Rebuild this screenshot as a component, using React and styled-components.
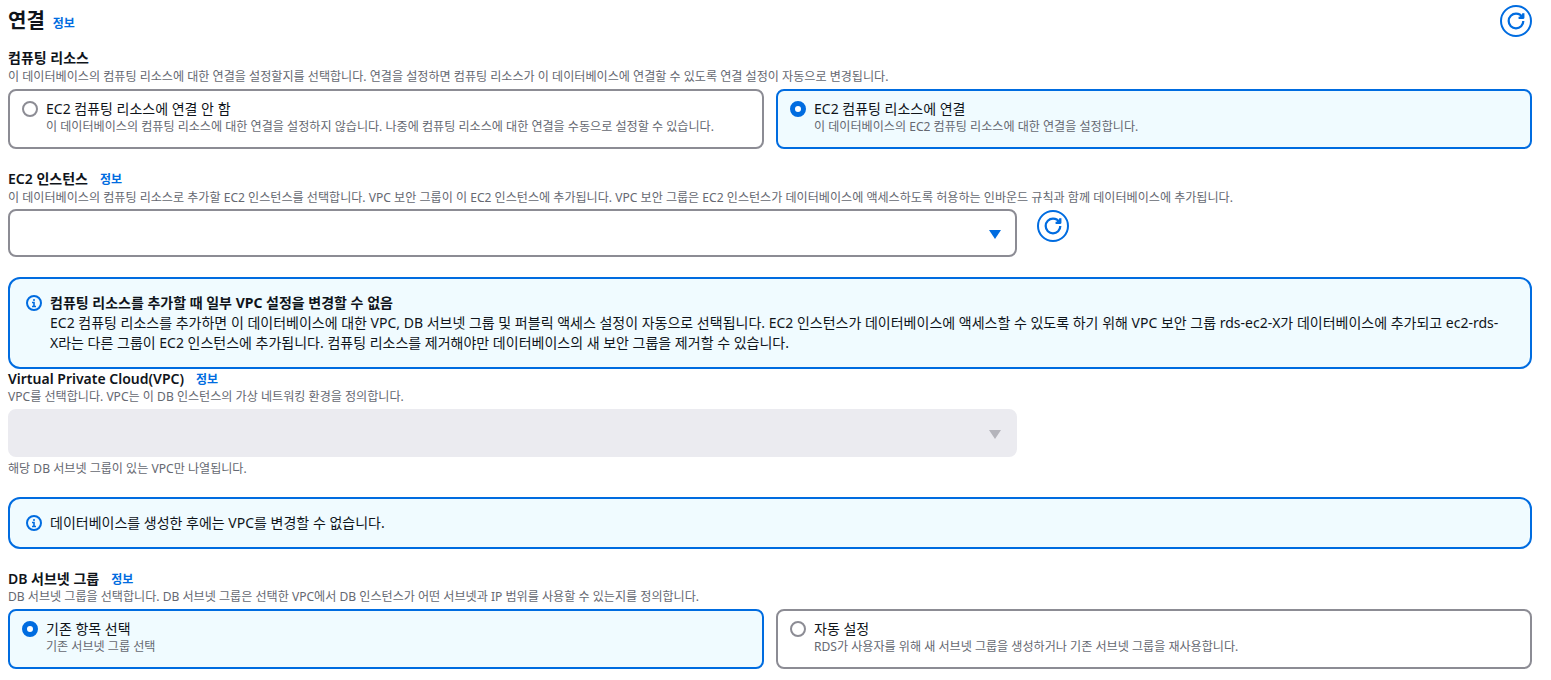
import React from "react";
import styled, { createGlobalStyle } from "styled-components";

const Global = createGlobalStyle`
  html, body { margin: 0; padding: 0; background: #fff; overflow: hidden; }
  body { font-family: "Noto Sans", "Noto Sans CJK KR", sans-serif; color: #0f141a; }
`;
const Page = styled.div`
  width: 1551px; height: 680px; box-sizing: border-box; padding: 0 19px 0 8px;
  display: flex; flex-direction: column; overflow: hidden;
`;
const Header = styled.div`
  height: 48px; display: flex; justify-content: space-between; align-items: flex-start; flex: none;
`;
const TitleRow = styled.div`display: flex; align-items: baseline; gap: 8px; padding-top: 6px;`;
const Title = styled.h2`margin: 0; font-size: 20px; line-height: 30px; font-weight: 700;`;
const Info = styled.a`font-size: 12px; line-height: 16px; font-weight: 700; color: #006ce0;`;
const Field = styled.div`display: flex; flex-direction: column; flex: none; margin-top: ${p => p.$mt || 0}px;`;
const LabelRow = styled.div`display: flex; align-items: baseline; gap: 12px; height: 20px;`;
const Label = styled.div`font-size: 14px; line-height: 20px; font-weight: 600;`;
const Desc = styled.div`
  font-size: 12.08px; line-height: 16px; color: #656871; white-space: nowrap; height: 16px;
  margin-top: ${p => p.$mt || 0}px;
`;
const Cards = styled.div`display: grid; grid-template-columns: 756px 756px; gap: 12px; margin-top: ${p => p.$mt || 4}px;`;
const Card = styled.div`
  box-sizing: border-box; height: 60px; border: 2px solid ${p => p.$on ? "#006ce0" : "#8c8c94"};
  border-radius: 8px; background: ${p => p.$on ? "#f0fbff" : "#fff"};
  display: flex; gap: 8px; padding: 8px 12px;
`;
const Radio = styled.span`
  box-sizing: border-box; flex: none; width: 16px; height: 16px; margin-top: 2px; border-radius: 50%;
  background: #fff; border: ${p => p.$on ? "5px solid #006ce0" : "2px solid #8c8c94"};
`;
const CardText = styled.div`display: flex; flex-direction: column;`;
const CardTitle = styled.div`font-size: 14px; line-height: 20px;`;
const Row = styled.div`display: flex; align-items: flex-start; gap: 20px; margin-top: ${p => p.$mt || 3}px;`;
const Select = styled.div`
  box-sizing: border-box; width: 1009px; height: 48px; border-radius: 8px;
  border: 2px solid ${p => p.$off ? "#ebebf0" : "#8c8c94"}; background: ${p => p.$off ? "#ebebf0" : "#fff"};
  display: flex; align-items: center; justify-content: flex-end; padding-right: 14px;
`;
const Caret = styled.span`
  width: 0; height: 0; border-left: 6px solid transparent; border-right: 6px solid transparent;
  border-top: 9px solid ${p => p.$off ? "#b4b4bb" : "#006ce0"}; margin-top: 2px;
`;
const RoundButton = styled.button`
  box-sizing: border-box; width: 32px; height: 32px; border-radius: 50%; border: 2px solid #006ce0;
  background: #fff; padding: 0; display: flex; align-items: center; justify-content: center; color: #006ce0;
  margin-top: ${p => p.$mt || 0}px;
`;
const Alert = styled.div`
  box-sizing: border-box; flex: none; width: 1524px; min-height: ${p => p.$h}px; margin-top: ${p => p.$mt}px;
  border: 2px solid #006ce0; border-radius: 12px; background: #f0fbff;
  display: flex; gap: 8px; padding: 14px 24px 14px 16px; font-size: 14px; line-height: 20px;
`;
const AlertIcon = styled.svg`flex: none; width: 16px; height: 16px; margin-top: 2px;`;
const AlertTitle = styled.div`font-weight: 700;`;

const Refresh = () => (
  <svg width="18" height="18" viewBox="0 0 16 16" fill="none" stroke="currentColor" strokeWidth="2" strokeLinejoin="round">
    <path d="M14.5 8A6.5 6.5 0 1 1 8 1.5c2.4 0 4.6 1.3 5.7 3.3" />
    <path d="M14.5 1v4.2h-4.2" fill="currentColor" />
  </svg>
);
const InfoIcon = () => (
  <AlertIcon viewBox="0 0 16 16" fill="none" stroke="#006ce0" strokeWidth="2">
    <circle cx="8" cy="8" r="7" />
    <path d="M8 11.5V7.5H6M10 11.5H6" strokeWidth="1.6" />
    <path d="M7.99 5H8v.01h-.01z" strokeLinejoin="round" />
  </AlertIcon>
);
const Opt = ({ on, title, desc }) => (
  <Card $on={on}>
    <Radio $on={on} />
    <CardText>
      <CardTitle>{title}</CardTitle>
      <Desc>{desc}</Desc>
    </CardText>
  </Card>
);

export default function App() {
  return (
    <Page>
      <Global />
      <Header>
        <TitleRow><Title>연결</Title><Info>정보</Info></TitleRow>
        <RoundButton $mt={5}><Refresh /></RoundButton>
      </Header>
      <Field>
        <Label>컴퓨팅 리소스</Label>
        <Desc $mt={1}>이 데이터베이스의 컴퓨팅 리소스에 대한 연결을 설정할지를 선택합니다. 연결을 설정하면 컴퓨팅 리소스가 이 데이터베이스에 연결할 수 있도록 연결 설정이 자동으로 변경됩니다.</Desc>
        <Cards>
          <Opt title="EC2 컴퓨팅 리소스에 연결 안 함" desc="이 데이터베이스의 컴퓨팅 리소스에 대한 연결을 설정하지 않습니다. 나중에 컴퓨팅 리소스에 대한 연결을 수동으로 설정할 수 있습니다." />
          <Opt on title="EC2 컴퓨팅 리소스에 연결" desc="이 데이터베이스의 EC2 컴퓨팅 리소스에 대한 연결을 설정합니다." />
        </Cards>
      </Field>
      <Field $mt={20}>
        <LabelRow><Label>EC2 인스턴스</Label><Info>정보</Info></LabelRow>
        <Desc $mt={1}>이 데이터베이스의 컴퓨팅 리소스로 추가할 EC2 인스턴스를 선택합니다. VPC 보안 그룹이 이 EC2 인스턴스에 추가됩니다. VPC 보안 그룹은 EC2 인스턴스가 데이터베이스에 액세스하도록 허용하는 인바운드 규칙과 함께 데이터베이스에 추가됩니다.</Desc>
        <Row>
          <Select><Caret /></Select>
          <RoundButton $mt={1}><Refresh /></RoundButton>
        </Row>
      </Field>
      <Alert $h={92} $mt={20}>
        <InfoIcon />
        <div>
          <AlertTitle>컴퓨팅 리소스를 추가할 때 일부 VPC 설정을 변경할 수 없음</AlertTitle>
          EC2 컴퓨팅 리소스를 추가하면 이 데이터베이스에 대한 VPC, DB 서브넷 그룹 및 퍼블릭 액세스 설정이 자동으로 선택됩니다. EC2 인스턴스가 데이터베이스에 액세스할 수 있도록 하기 위해 VPC 보안 그룹 rds-ec2-X가 데이터베이스에 추가되고 ec2-rds-X라는 다른 그룹이 EC2 인스턴스에 추가됩니다. 컴퓨팅 리소스를 제거해야만 데이터베이스의 새 보안 그룹을 제거할 수 있습니다.
        </div>
      </Alert>
      <Field>
        <LabelRow><Label>Virtual Private Cloud(VPC)</Label><Info>정보</Info></LabelRow>
        <Desc>VPC를 선택합니다. VPC는 이 DB 인스턴스의 가상 네트워킹 환경을 정의합니다.</Desc>
        <Row $mt={4}><Select $off><Caret $off /></Select></Row>
        <Desc $mt={4}>해당 DB 서브넷 그룹이 있는 VPC만 나열됩니다.</Desc>
      </Field>
      <Alert $h={52} $mt={20}>
        <InfoIcon />
        <div>데이터베이스를 생성한 후에는 VPC를 변경할 수 없습니다.</div>
      </Alert>
      <Field $mt={20}>
        <LabelRow><Label>DB 서브넷 그룹</Label><Info>정보</Info></LabelRow>
        <Desc>DB 서브넷 그룹을 선택합니다. DB 서브넷 그룹은 선택한 VPC에서 DB 인스턴스가 어떤 서브넷과 IP 범위를 사용할 수 있는지를 정의합니다.</Desc>
        <Cards>
          <Opt on title="기존 항목 선택" desc="기존 서브넷 그룹 선택" />
          <Opt title="자동 설정" desc="RDS가 사용자를 위해 새 서브넷 그룹을 생성하거나 기존 서브넷 그룹을 재사용합니다." />
        </Cards>
      </Field>
    </Page>
  );
}
